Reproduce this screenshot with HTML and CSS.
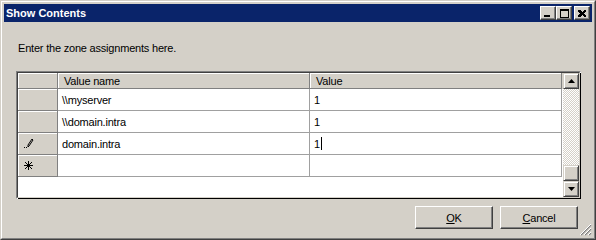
FILE: index.html
```html
<!DOCTYPE html>
<html lang="en">
<head>
    <meta charset="UTF-8">
    <link rel="stylesheet" href="styles.css">
    <title>Show Contents</title>
</head>
<body>
    <div class="window">
        <div class="frame">
            <div class="titlebar">
                <span class="title">Show Contents</span>
                <div class="caption-buttons">
                    <button class="cap">
                        <svg width="8" height="8" viewBox="0 0 8 8" shape-rendering="crispEdges"><rect x="0" y="6" width="6" height="2" fill="#000"/></svg>
                    </button>
                    <button class="cap">
                        <svg width="9" height="9" viewBox="0 0 9 9" shape-rendering="crispEdges"><path d="M0 0h9v9h-9z M1 2v6h7v-6z" fill="#000" fill-rule="evenodd"/></svg>
                    </button>
                    <button class="cap close">
                        <svg width="8" height="7" viewBox="0 0 8 7" shape-rendering="crispEdges"><path d="M0 0h2l2 2 2-2h2v1l-2 2.5 2 2.5v1h-2l-2-2-2 2h-2v-1l2-2.5-2-2.5z" fill="#000"/></svg>
                    </button>
                </div>
            </div>

            <div class="content">
                <p class="prompt">Enter the zone assignments here.</p>

                <div class="grid-box">
                    <div class="grid">
                        <div class="table">
                            <div class="row head">
                                <div class="rh"></div>
                                <div class="cell">Value name</div>
                                <div class="cell">Value</div>
                            </div>
                            <div class="row">
                                <div class="rh"></div>
                                <div class="cell">\\myserver</div>
                                <div class="cell">1</div>
                            </div>
                            <div class="row">
                                <div class="rh"></div>
                                <div class="cell">\\domain.intra</div>
                                <div class="cell">1</div>
                            </div>
                            <div class="row">
                                <div class="rh">
                                    <svg width="10" height="11" viewBox="0 0 10 11" shape-rendering="crispEdges">
                                        <rect x="0" y="9" width="1" height="1" fill="#000"/>
                                        <rect x="2" y="9" width="1" height="1" fill="#000"/>
                                        <path d="M4 9 L4 7 L8 1 L9 2 L5 8 Z" fill="none" stroke="#000" stroke-width="1" shape-rendering="auto"/>
                                    </svg>
                                </div>
                                <div class="cell">domain.intra</div>
                                <div class="cell">1<span class="caret"></span></div>
                            </div>
                            <div class="row">
                                <div class="rh">
                                    <svg width="9" height="9" viewBox="0 0 9 9" shape-rendering="crispEdges">
                                        <path d="M4.5 0v9 M0 4.5h9 M1 1l7 7 M8 1l-7 7" stroke="#000" stroke-width="1" fill="none" shape-rendering="auto"/>
                                    </svg>
                                </div>
                                <div class="cell"></div>
                                <div class="cell"></div>
                            </div>
                        </div>

                        <div class="scrollbar">
                            <div class="sb-btn">
                                <svg width="7" height="4" viewBox="0 0 7 4"><polygon points="3.5,0 7,4 0,4" fill="#000"/></svg>
                            </div>
                            <div class="sb-track">
                                <div class="sb-thumb"></div>
                            </div>
                            <div class="sb-btn">
                                <svg width="7" height="4" viewBox="0 0 7 4"><polygon points="0,0 7,0 3.5,4" fill="#000"/></svg>
                            </div>
                        </div>
                    </div>
                </div>

                <div class="actions">
                    <button class="btn"><u>O</u>K</button>
                    <button class="btn"><u>C</u>ancel</button>
                </div>

                <svg class="grip" width="12" height="12" viewBox="0 0 12 12" shape-rendering="crispEdges">
                    <path d="M11 1 L1 11 M11 5 L5 11 M11 9 L9 11" stroke="#808080" stroke-width="1.2" fill="none" shape-rendering="auto"/>
                    <path d="M11 0 L0 11 M11 4 L4 11 M11 8 L8 11" stroke="#fff" stroke-width="1" fill="none" shape-rendering="auto"/>
                </svg>
            </div>
        </div>
    </div>
</body>
</html>
```

FILE: styles.css
```css
body {
    margin: 0;
    padding: 0;
    font-family: "Liberation Sans", Arial, sans-serif;
    font-size: 11px;
    letter-spacing: -0.2px;
    color: #000;
    background-color: #d4d0c8;
}

.window {
    width: 596px;
    height: 240px;
    box-sizing: border-box;
    border: 1px solid;
    border-color: #d4d0c8 #404040 #404040 #d4d0c8;
}

.frame {
    height: 100%;
    box-sizing: border-box;
    border: 1px solid;
    border-color: #fff #808080 #808080 #fff;
    padding: 2px;
    display: flex;
    flex-direction: column;
}

.titlebar {
    height: 18px;
    background-color: #0a246a;
    display: flex;
    align-items: center;
    justify-content: space-between;
    padding: 0 2px;
}

.title {
    color: #fff;
    font-weight: bold;
    font-size: 11px;
    letter-spacing: 0;
}

.caption-buttons {
    display: flex;
}

.cap {
    width: 16px;
    height: 14px;
    padding: 0;
    background-color: #d4d0c8;
    border: 1px solid;
    border-color: #fff #404040 #404040 #fff;
    box-shadow: inset -1px -1px 0 #808080;
    display: flex;
    align-items: center;
    justify-content: center;
}

.cap.close {
    margin-left: 2px;
}

.content {
    position: relative;
    flex: 1;
    padding: 0 11px 0 12px;
}

.prompt {
    margin: 19px 0 0 2px;
    line-height: 14px;
}

.grid-box {
    margin-top: 16px;
    height: 128px;
    box-sizing: border-box;
    border: 1px solid;
    border-color: #808080 #fff #fff #808080;
}

.grid {
    height: 100%;
    box-sizing: border-box;
    border: 1px solid;
    border-color: #404040 #d4d0c8 #d4d0c8 #404040;
    background-color: #fff;
    display: flex;
    box-shadow: 1px 1px 0 #000;
}

.table {
    flex: 1;
}

.row {
    display: flex;
    height: 22px;
}

.row.head {
    height: 16px;
    background-color: #d4d0c8;
}

.rh {
    width: 40px;
    flex-shrink: 0;
    box-sizing: border-box;
    background-color: #d4d0c8;
    border-right: 1px solid #808080;
    border-bottom: 1px solid #808080;
    box-shadow: inset 1px 1px 0 #fff;
    display: flex;
    align-items: center;
    padding-left: 6px;
}

.cell {
    width: 252px;
    box-sizing: border-box;
    border-right: 1px solid #a0a0a0;
    border-bottom: 1px solid #a0a0a0;
    padding-left: 4px;
    display: flex;
    align-items: center;
    white-space: nowrap;
}

.head .cell {
    padding-left: 6px;
    border-right-color: #808080;
    border-bottom-color: #808080;
    box-shadow: inset 1px 1px 0 #fff;
}

.caret {
    display: inline-block;
    width: 1px;
    height: 13px;
    background-color: #000;
    margin-left: 1px;
}

.scrollbar {
    width: 16px;
    display: flex;
    flex-direction: column;
}

.sb-btn {
    height: 16px;
    box-sizing: border-box;
    background-color: #d4d0c8;
    border: 1px solid;
    border-color: #d4d0c8 #404040 #404040 #d4d0c8;
    box-shadow: inset 1px 1px 0 #fff, inset -1px -1px 0 #808080;
    display: flex;
    align-items: center;
    justify-content: center;
}

.sb-track {
    flex: 1;
    display: flex;
    flex-direction: column;
    justify-content: flex-end;
    background: repeating-conic-gradient(#d4d0c8 0 25%, #fff 0 50%) 0 0 / 2px 2px;
}

.sb-thumb {
    height: 16px;
    box-sizing: border-box;
    background-color: #d4d0c8;
    border: 1px solid;
    border-color: #d4d0c8 #404040 #404040 #d4d0c8;
    box-shadow: inset 1px 1px 0 #fff, inset -1px -1px 0 #808080;
}

.actions {
    display: flex;
    justify-content: flex-end;
    gap: 7px;
    margin-top: 7px;
    padding-right: 3px;
}

.btn {
    width: 78px;
    height: 23px;
    font-family: "Liberation Sans", Arial, sans-serif;
    font-size: 11px;
    letter-spacing: -0.2px;
    color: #000;
    background-color: #d4d0c8;
    border: 1px solid;
    border-color: #fff #404040 #404040 #fff;
    box-shadow: inset -1px -1px 0 #808080;
    padding: 0;
}

.grip {
    position: absolute;
    right: 0;
    bottom: 0;
}
```
